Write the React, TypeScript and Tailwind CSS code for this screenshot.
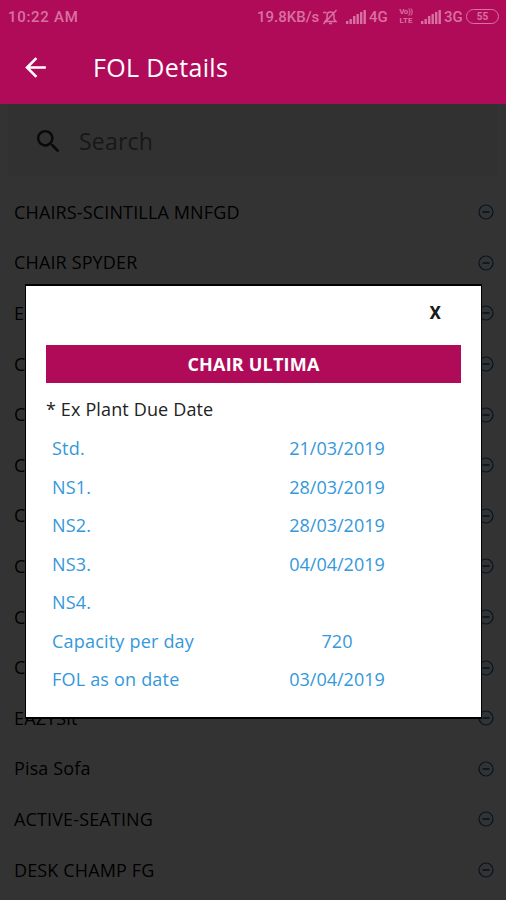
import { MdArrowBack, MdSearch } from "react-icons/md";

const items = [
  "CHAIRS-SCINTILLA MNFGD",
  "CHAIR SPYDER",
  "E",
  "C",
  "C",
  "C",
  "C",
  "C",
  "C",
  "C",
  "EAZYSit",
  "Pisa Sofa",
  "ACTIVE-SEATING",
  "DESK CHAMP FG",
];

const details = [
  { label: "Std.", value: "21/03/2019" },
  { label: "NS1.", value: "28/03/2019" },
  { label: "NS2.", value: "28/03/2019" },
  { label: "NS3.", value: "04/04/2019" },
  { label: "NS4.", value: "" },
  { label: "Capacity per day", value: "720" },
  { label: "FOL as on date", value: "03/04/2019" },
];

const Signal = () => (
  <svg width="20" height="14" viewBox="0 0 20 14" fill="currentColor">
    <rect x="0" y="11" width="2.4" height="3" />
    <rect x="3.5" y="9" width="2.4" height="5" />
    <rect x="7" y="6" width="2.4" height="8" />
    <rect x="10.5" y="4" width="2.4" height="10" />
    <rect x="14" y="2" width="2.4" height="12" />
    <rect x="17.5" y="0" width="2.4" height="14" />
  </svg>
);

const Muted = () => (
  <svg
    width="17"
    height="16"
    viewBox="0 0 17 16"
    fill="none"
    stroke="currentColor"
    strokeWidth="1.5">
    <path d="M3 12.500h11l-2-2.500V6.500C12 4.200 10.500 3 8.500 3S5 4.200 5 6.500V10l-2 2.500zM7 14.500h3M1.500 15L14.500 1M1 3.500h3.500" />
  </svg>
);

const StatusBar = () => (
  <div className="flex h-[33px] items-center justify-between pr-[7px] pl-2 font-['Roboto',sans-serif] text-[15px] font-medium text-[#d871a1]">
    <span className="pt-px tracking-[0.7px]">10:22 AM</span>
    <div className="flex items-center">
      <span className="w-[65px] pt-px whitespace-nowrap">19.8KB/s</span>
      <Muted />
      <div className="ml-[7px] flex items-center gap-[3px]">
        <Signal />
        <span className="w-[20px] pt-px">4G</span>
      </div>
      <div className="ml-[8px] flex w-[18px] flex-col items-center gap-px text-[8px] leading-[8px] font-bold">
        <span className="tracking-[-0.4px]">Vo))</span>
        <span>LTE</span>
      </div>
      <div className="ml-[6px] flex items-center gap-[3px]">
        <Signal />
        <span className="w-[19px] pt-px">3G</span>
      </div>
      <span className="ml-[3px] flex h-[15px] w-[33px] items-center justify-center rounded-full border-[1.5px] border-current text-[10px] font-bold">
        55
      </span>
    </div>
  </div>
);

const Header = () => (
  <div className="flex h-[71px] items-center pb-px pl-5 text-white">
    <MdArrowBack size={31} className="mb-[2px]" />
    <h1 className="ml-[42px] text-[25px] font-normal tracking-[0.35px]">
      FOL Details
    </h1>
  </div>
);

const RemoveIcon = () => (
  <svg
    width="16"
    height="16"
    viewBox="0 0 16 16"
    fill="none"
    stroke="#0d61a8"
    strokeWidth="1.2">
    <circle cx="8" cy="8" r="7" />
    <path d="M4.500 8h7" strokeWidth="1.6" />
  </svg>
);

const ProductList = () => (
  <div className="h-[796px] overflow-hidden bg-white">
    {/* Search */}
    <div className="mx-2 flex h-[72px] items-center bg-[#f5f5f5] pt-[2px] pl-[25px]">
      <MdSearch size={31} className="text-[#333333]" />
      <span className="ml-[15px] text-[23px] tracking-[0.2px] text-[#777777]">
        Search
      </span>
    </div>
    {/* Items */}
    <ul className="pt-[11px]">
      {items.map((item, index) => (
        <li
          key={index}
          className="flex h-[50.6px] items-center justify-between pr-[12.500px] pl-[14px] text-[18px] tracking-[0.14px] text-black">
          {item}
          <RemoveIcon />
        </li>
      ))}
    </ul>
  </div>
);

const DetailsModal = () => (
  <div className="h-[435px] w-[457px] border-x border-y-2 border-black bg-white px-5">
    <div className="flex h-[59px] items-center justify-end pr-5 pb-[5px]">
      <button className="font-['Roboto',sans-serif] text-[18px] font-bold text-[#1a1a1a]">
        X
      </button>
    </div>
    <div className="flex h-[38px] items-center justify-center bg-[#b00b59] pt-px text-[18px] font-bold tracking-[0.2px] text-white">
      CHAIR ULTIMA
    </div>
    <p className="mt-[14px] h-[33px] text-[18px] leading-[25px] tracking-[0.14px] text-[#222222]">
      * Ex Plant Due Date
    </p>
    {details.map(({ label, value }) => (
      <div
        key={label}
        className="grid h-[38.5px] grid-cols-[186px_198px] items-center pl-[6px] text-[18px] text-[#3498db]">
        <span className="tracking-[0.2px]">{label}</span>
        <span className="text-center">{value}</span>
      </div>
    ))}
  </div>
);

const App = () => {
  return (
    <div className="relative h-[900px] w-[506px] overflow-hidden bg-[#b00b59] font-['Open_Sans',sans-serif]">
      <StatusBar />
      <Header />
      <ProductList />
      {/* Backdrop */}
      <div className="absolute inset-x-0 top-[104px] bottom-0 bg-black/80 pt-[179.500px] pl-[25px]">
        <DetailsModal />
      </div>
    </div>
  );
};

export default App;
